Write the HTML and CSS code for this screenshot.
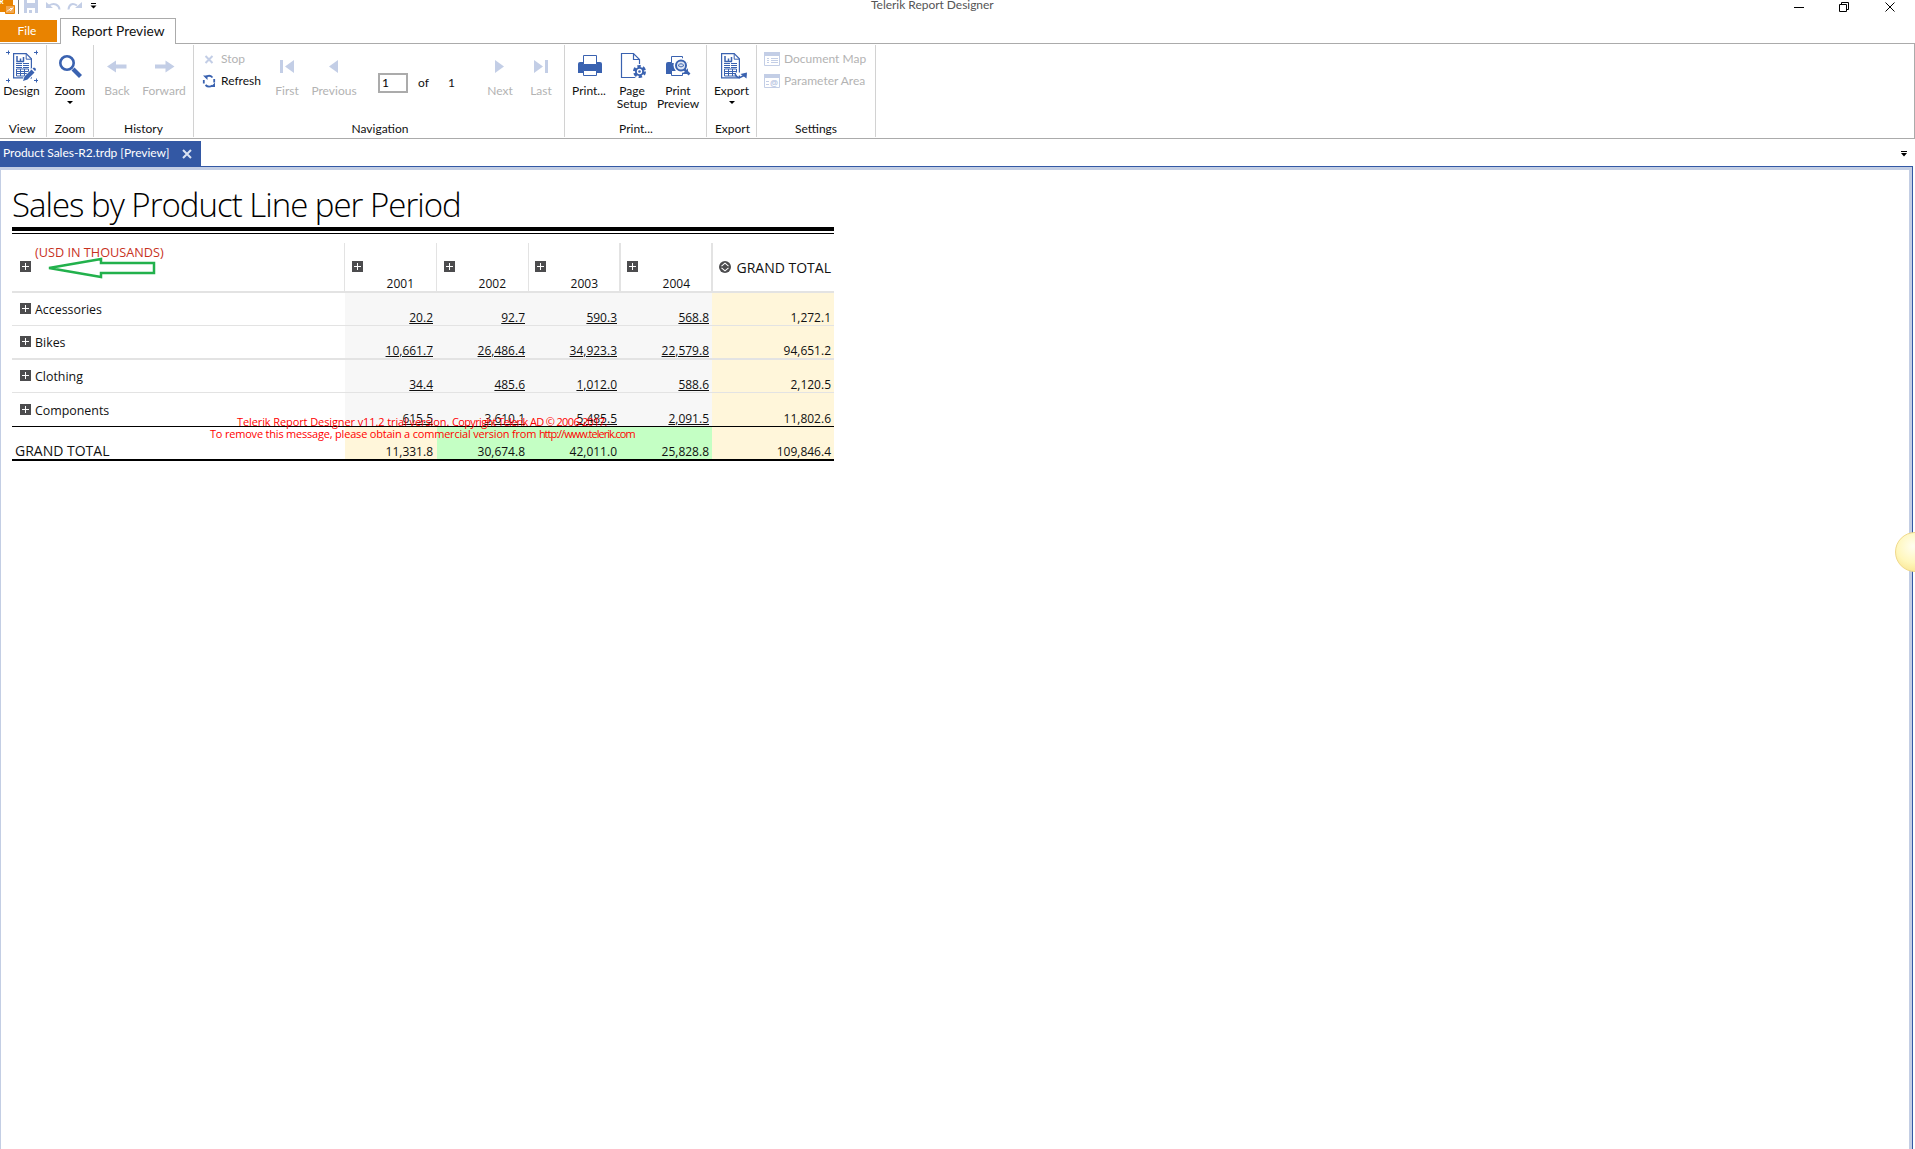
FILE: index.html
```html
<!DOCTYPE html>
<html lang="en">
<head>
    <meta charset="UTF-8">
    <title>Telerik Report Designer</title>
    <link rel="stylesheet" href="styles.css">
</head>
<body>
<svg width="0" height="0" class="defs">
    <symbol id="plus" viewBox="0 0 11 11">
        <path fill="#4c4c4e" d="M0 0h11v11H0z"/>
        <path stroke="#fff" d="M2 5.5h7M5.5 2v7"/>
    </symbol>
    <symbol id="report" viewBox="0 0 20 26">
        <path fill="#fff" stroke="#3a62b0" stroke-width="1.2" d="M.6.6h12.6l5.2 5.2v19H.6z"/>
        <path fill="none" stroke="#3a62b0" d="M13.2.6v5.6h5.2"/>
        <path fill="none" stroke="#3a62b0" stroke-width="1.500" d="M4 3v5.500h7M7.500 5.500v3M10.500 4v4.500"/>
        <path stroke="#3a62b0" d="M3 10.500h6M10 10.500h6M3 12.500h6M10 12.500h6M3 14.500h6M10 14.500h6"/>
        <path fill="none" stroke="#3a62b0" d="M3.500 16v7h12v-7zM3 18.500h13M3 20.500h13M7.500 16v7M11.500 16v7"/>
    </symbol>
</svg>

<div class="titlebar">
    <div class="quick">
        <svg width="100" height="16">
            <path fill="#e98300" d="M0 0h13v6H5v6H0z"/>
            <text x="-1" y="4" class="logo_r">R</text>
            <path fill="#f2a64d" stroke="#e98300" d="M5.500 5.500h9v8h-9z"/>
            <path fill="none" stroke="#fff" d="M7 11.500l2-2 2 1 2-3M10 8.500h2"/>
            <path stroke="#777" d="M18.500 0v14"/>
            <path fill="#c3cee6" d="M24 0h14v13H24z"/>
            <path fill="#fff" d="M27 0h8v3h-8zM27 8h8v5h-8z"/>
            <path fill="#c3cee6" d="M29 10h3v3h-3z"/>
            <path fill="none" stroke="#c3cee6" stroke-width="2" d="M49 5.500c5-3 10-1 10.500 4M77 5.500c-5-3-8-1-8.500 4"/>
            <path fill="#c3cee6" d="M46 8V2l7 6zM82 8V2l-7 6z"/>
            <path d="M91 3h5v1h-5zM90.500 5.500h6l-3 3z"/>
        </svg>
    </div>
    <div class="app_name">Telerik Report Designer</div>
    <svg class="win_btns" width="110" height="14">
        <g fill="none" stroke="#000">
            <path d="M4 7.500h10"/>
            <path d="M49.500 4.500h7v7h-7zM51.500 4.500v-2h7v7h-2"/>
            <path d="M95.500 2.500l9 9M104.500 2.500l-9 9"/>
        </g>
    </svg>
</div>

<div class="tabs">
    <div class="tab_file">File</div>
    <div class="tab_on">Report Preview</div>
</div>

<div class="ribbon">
    <div class="group g_view">
        <div class="items">
            <div class="btn w43">
                <svg width="34" height="34" viewBox="0 0 34 34">
                    <path stroke="#3a62b0" d="M1 3.500h4M3.500 1.500v4M29 3.500h4M31.500 1.500v4M1 31.500h4M3.500 29.500v4M29 31.500h4M31.500 29.500v4"/>
                    <use href="#report" x="8" y="4" width="20" height="26"/>
                    <path stroke="#fff" stroke-width="6" d="M20 31l9-10"/>
                    <path fill="#3a62b0" d="M18 32l1.500-4.500 7-7 3 3-7 7zM27.500 19.500l1.500-1q2 0 2 2.500l-1 1z"/>
                </svg>
                <span>Design</span>
            </div>
        </div>
        <div class="label">View</div>
    </div>
    <div class="group g_zoom">
        <div class="items">
            <div class="btn w46">
                <svg width="34" height="34" viewBox="0 0 34 34">
                    <circle cx="14" cy="14" r="6.700" fill="none" stroke="#3a62b0" stroke-width="2.600"/>
                    <path stroke="#3a62b0" stroke-width="4.200" d="M20 20l7.500 7.500"/>
                </svg>
                <span>Zoom</span>
                <i class="caret"></i>
            </div>
        </div>
        <div class="label">Zoom</div>
    </div>
    <div class="group g_history">
        <div class="items">
            <div class="btn off w46">
                <svg width="34" height="34"><path fill="#c3cee6" d="M7 17.500l9-6v4h10.500v4H16v4z"/></svg>
                <span>Back</span>
            </div>
            <div class="btn off w48">
                <svg width="34" height="34"><path fill="#c3cee6" d="M27.500 17.500l-9-6v4H8v4h10.500v4z"/></svg>
                <span>Forward</span>
            </div>
        </div>
        <div class="label">History</div>
    </div>
    <div class="group g_nav">
        <div class="items">
            <div class="list list_nav">
                <div class="row off">
                    <svg width="14" height="14"><path stroke="#c3cee6" stroke-width="2" d="M3.500 4l7 7M10.500 4l-7 7"/></svg>
                    <span>Stop</span>
                </div>
                <div class="row">
                    <svg width="14" height="14">
                        <path fill="none" stroke="#3a62b0" stroke-width="1.800" d="M3.500 3.200q4-3 7 .3M12.200 5v3.500M10.500 11.500q-4 2.500-7-.5M1.800 9.500V6"/>
                        <path fill="#3a62b0" d="M1 1.500h4.500v4.500zM13 8.500v4.500H8.500z"/>
                    </svg>
                    <span>Refresh</span>
                </div>
            </div>
            <div class="btn off w40">
                <svg width="34" height="34"><path fill="#c3cee6" d="M10 11h3v13h-3zM24 11v13l-9-6.500z"/></svg>
                <span>First</span>
            </div>
            <div class="btn off w54">
                <svg width="34" height="34"><path fill="#c3cee6" d="M21 11v13l-9-6.500z"/></svg>
                <span>Previous</span>
            </div>
            <div class="pager">
                <input type="text" value="1">
                <span class="of">of</span>
                <span>1</span>
            </div>
            <div class="btn off w40">
                <svg width="34" height="34"><path fill="#c3cee6" d="M12 11v13l9-6.500z"/></svg>
                <span>Next</span>
            </div>
            <div class="btn off w42">
                <svg width="34" height="34"><path fill="#c3cee6" d="M10 11v13l9-6.500zM21 11h3v13h-3z"/></svg>
                <span>Last</span>
            </div>
        </div>
        <div class="label">Navigation</div>
    </div>
    <div class="group g_print">
        <div class="items">
            <div class="btn w46">
                <svg width="34" height="34">
                    <path fill="#3a62b0" d="M6 15q0-2 2-2h20q2 0 2 2v9H6z"/>
                    <path fill="#fff" stroke="#3a62b0" d="M11.500 6.500h13v9h-13zM11.500 21.500h13v5h-13z"/>
                </svg>
                <span>Print...</span>
            </div>
            <div class="btn w40">
                <svg width="34" height="34">
                    <path fill="none" stroke="#3a62b0" stroke-width="1.200" d="M6.500 4.500h12l6 6v18h-18zM18.500 4.500v6h6"/>
                    <circle cx="24.500" cy="22.500" r="7.500" fill="#fff"/>
                    <circle cx="24.500" cy="22.500" r="4.500" fill="#3a62b0"/>
                    <circle cx="24.500" cy="22.500" r="5" fill="none" stroke="#3a62b0" stroke-width="3" stroke-dasharray="3.200 2.040"/>
                    <circle cx="24.500" cy="22.500" r="2" fill="none" stroke="#fff" stroke-width="1.300"/>
                </svg>
                <span>Page<br>Setup</span>
            </div>
            <div class="btn w52">
                <svg width="34" height="34">
                    <path fill="#3a62b0" d="M5 15q0-2 2-2h20v12H5z"/>
                    <path fill="#fff" stroke="#3a62b0" d="M10.500 7.500h11v7h-11zM10.500 21.500h11v5h-11z"/>
                    <circle cx="20" cy="16.500" r="7.500" fill="#fff"/>
                    <circle cx="20" cy="16.500" r="5" fill="#dfe6f3" stroke="#3a62b0" stroke-width="2"/>
                    <path fill="none" stroke="#3a62b0" d="M17 16.500q3-3.500 6 0q-3 3-6 0"/>
                    <path stroke="#3a62b0" stroke-width="2.600" d="M23.500 20.500l5 5"/>
                </svg>
                <span>Print<br>Preview</span>
            </div>
        </div>
        <div class="label">Print...</div>
    </div>
    <div class="group g_export">
        <div class="items">
            <div class="btn w49">
                <svg width="34" height="34">
                    <use href="#report" x="6" y="4" width="20" height="26"/>
                    <path stroke="#fff" stroke-width="3" d="M20 25h8"/>
                    <path fill="none" stroke="#3a62b0" stroke-width="1.500" d="M20 24q1 5 5 4.500l4-2"/>
                    <path fill="#3a62b0" d="M25.500 25l6.500-1.500-.5 6z"/>
                </svg>
                <span>Export</span>
                <i class="caret"></i>
            </div>
        </div>
        <div class="label">Export</div>
    </div>
    <div class="group g_settings">
        <div class="items">
            <div class="list">
                <div class="row off">
                    <svg width="16" height="14">
                        <path fill="none" stroke="#c3cee6" d="M.5.5h15v13H.5zM3 6.500h2M3 8.500h2M3 10.500h2M7 6.500h7M7 8.500h7M7 10.500h7"/>
                        <path fill="#c3cee6" d="M0 0h16v4H0z"/>
                    </svg>
                    <span>Document Map</span>
                </div>
                <div class="row off">
                    <svg width="16" height="14">
                        <path fill="none" stroke="#c3cee6" d="M.5.500h15v13H.5zM2 7.500h3M2 10.500h3"/>
                        <path fill="#c3cee6" d="M0 0h16v4H0z"/>
                        <text x="6" y="12" class="at">@</text>
                    </svg>
                    <span>Parameter Area</span>
                </div>
            </div>
        </div>
        <div class="label">Settings</div>
    </div>
</div>

<div class="docs">
    <div class="doc_tab">
        <span>Product Sales-R2.trdp [Preview]</span>
        <svg width="10" height="10"><path stroke="#dbe3f3" stroke-width="2" d="M1 1l8 8M9 1L1 9"/></svg>
    </div>
    <svg class="docs_menu" width="6" height="6"><path d="M0 0h6v1H0zM0 2h6L3 5.500z"/></svg>
</div>

<div class="viewer">
    <div class="report">
        <h1>Sales by Product Line per Period</h1>
        <div class="rule"></div>
        <table>
            <colgroup>
                <col class="c_name"><col class="c_year"><col class="c_year"><col class="c_year"><col class="c_last"><col class="c_total">
            </colgroup>
            <tr class="head">
                <th class="corner"><span class="usd">(USD IN THOUSANDS)</span><svg class="plus" width="11" height="11"><use href="#plus"/></svg></th>
                <th><svg class="plus" width="11" height="11"><use href="#plus"/></svg><span class="year">2001</span></th>
                <th><svg class="plus" width="11" height="11"><use href="#plus"/></svg><span class="year">2002</span></th>
                <th class="wide"><svg class="plus" width="11" height="11"><use href="#plus"/></svg><span class="year">2003</span></th>
                <th class="y2004"><svg class="plus" width="11" height="11"><use href="#plus"/></svg><span class="year">2004</span></th>
                <th class="th_total">
                    <div class="gt">
                        <svg width="12" height="12">
                            <circle cx="6" cy="6" r="6" fill="#4c4c4e"/>
                            <path fill="none" stroke="#fff" stroke-width="1.100" d="M2.500 5.200L6 2.200l3.500 3M2.500 6.800l3.500 3 3.500-3"/>
                        </svg>
                        <span>GRAND TOTAL</span>
                    </div>
                </th>
            </tr>
            <tr class="r33">
                <td><svg width="11" height="11"><use href="#plus"/></svg><span>Accessories</span></td>
                <td><u>20.2</u></td><td><u>92.7</u></td><td><u>590.3</u></td><td><u>568.8</u></td><td>1,272.1</td>
            </tr>
            <tr class="r34">
                <td><svg width="11" height="11"><use href="#plus"/></svg><span>Bikes</span></td>
                <td><u>10,661.7</u></td><td><u>26,486.4</u></td><td><u>34,923.3</u></td><td><u>22,579.8</u></td><td>94,651.2</td>
            </tr>
            <tr class="r33">
                <td><svg width="11" height="11"><use href="#plus"/></svg><span>Clothing</span></td>
                <td><u>34.4</u></td><td><u>485.6</u></td><td><u>1,012.0</u></td><td><u>588.6</u></td><td>2,120.5</td>
            </tr>
            <tr class="r34 last">
                <td><svg width="11" height="11"><use href="#plus"/></svg><span>Components</span></td>
                <td><u>615.5</u></td><td><u>3,610.1</u></td><td><u>5,485.5</u></td><td><u>2,091.5</u></td><td>11,802.6</td>
            </tr>
            <tr class="total">
                <td>GRAND TOTAL</td>
                <td>11,331.8</td><td class="good">30,674.8</td><td class="good">42,011.0</td><td class="good">25,828.8</td><td>109,846.4</td>
            </tr>
        </table>
        <div class="trial t1">Telerik Report Designer v11.2 trial version. <span>Copyright Telerik AD © 2006-2017.</span></div>
        <div class="trial t2">To remove this message, please obtain a commercial version from <span>http://www.telerik.com</span></div>
        <svg class="arrow" width="110" height="24">
            <path fill="none" stroke="#22b14c" stroke-width="2.500" d="M2 11L54 2v4h53v10H54v4z"/>
        </svg>
    </div>
</div>
<div class="bubble"></div>
</body>
</html>
```
FILE: styles.css
```css
* {
    margin: 0;
    padding: 0;
    box-sizing: border-box;
}

html, body {
    height: 100%;
    overflow: hidden;
}

body {
    position: relative;
    display: flex;
    flex-direction: column;
    background: #fff;
    color: #111;
    font: 12px/13px Lato, "Open Sans", sans-serif;
}

svg {
    display: block;
    flex: none;
}

.defs {
    position: absolute;
}

.titlebar {
    display: flex;
    height: 18px;
    flex: none;
}

.quick {
    width: 871px;
}

.logo_r {
    font: bold 7px "Open Sans", sans-serif;
    fill: #fff;
}

.app_name {
    flex: 1;
    color: #555;
    line-height: 10px;
    letter-spacing: -0.03px;
}

.win_btns {
    margin-right: 15px;
}

.tabs {
    display: flex;
    height: 26px;
    flex: none;
    margin-bottom: -1px;
    z-index: 1;
}

.tab_file {
    width: 57px;
    height: 22px;
    margin: 2px 3px 0 0;
    padding-right: 3px;
    background: #e98300;
    color: #fff;
    text-align: center;
    line-height: 21px;
}

.tab_on {
    width: 116px;
    border: 1px solid #ababab;
    border-bottom: 0;
    background: #fff;
    text-align: center;
    font-size: 13.800px;
    line-height: 24px;
    white-space: nowrap;
}

.ribbon {
    display: flex;
    flex: none;
    height: 96px;
    border: 1px solid #ababab;
    border-left: 0;
    padding: 1px 0;
}

.group {
    display: flex;
    flex-direction: column;
    border-right: 1px solid #d2d2d2;
    flex: none;
}

.g_view { width: 47px; }
.g_zoom { width: 47px; }
.g_history { width: 100px; }
.g_nav { width: 371px; }
.g_print { width: 142px; padding-left: 1px; }
.g_export { width: 50px; }
.g_settings { width: 119px; }

.items {
    display: flex;
    height: 77px;
    padding-top: 4px;
}

.label {
    text-align: center;
}

.g_view .label {
    padding-right: 2px;
}

.g_nav .label, .g_export .label {
    padding-left: 2px;
}

.btn {
    display: flex;
    flex-direction: column;
    align-items: center;
    text-align: center;
    flex: none;
}

.btn span {
    margin-top: 1px;
}

.btn .caret {
    border: 3px solid transparent;
    border-top-color: #000;
    border-bottom: 0;
    margin-top: 4px;
}

.off {
    color: #b3b3b3;
}

.w40 { width: 40px; }
.w42 { width: 42px; }
.w43 { width: 43px; }
.w46 { width: 46px; }
.w48 { width: 48px; }
.w49 { width: 49px; }
.w52 { width: 52px; }
.w54 { width: 54px; }

.list {
    padding: 3px 0 0 7px;
}

.row {
    display: flex;
    align-items: center;
    height: 14px;
    margin-bottom: 8px;
    gap: 4px;
    white-space: nowrap;
}

.row span {
    padding-bottom: 2px;
}

.list_nav {
    width: 73px;
    padding-left: 8px;
}

.list_nav .row {
    gap: 5px;
}

.at {
    font: bold 9px "Open Sans", sans-serif;
    fill: #c3cee6;
}

.pager {
    display: flex;
    align-items: center;
    width: 119px;
    height: 20px;
    margin-top: 24px;
    padding-left: 17px;
}

.pager input {
    width: 30px;
    height: 20px;
    border: 2px solid #ababab;
    font: 12px Lato, sans-serif;
    padding: 0 0 1px 2px;
}

.pager span {
    padding-bottom: 1px;
}

.pager .of {
    margin: 0 19px 0 10px;
}

.docs {
    display: flex;
    justify-content: space-between;
    height: 27px;
    padding-top: 2px;
    flex: none;
}

.doc_tab {
    display: flex;
    align-items: center;
    justify-content: space-between;
    width: 201px;
    padding: 0 9px 0 3px;
    background: #3358a4;
    color: #fff;
}

.doc_tab span {
    padding-bottom: 2px;
    letter-spacing: -0.03px;
}

.docs_menu {
    margin: 10px 8px 0 0;
}

.viewer {
    flex: 1;
    width: 1913px;
    border-top: 1px solid #3358a4;
    border-right: 1px solid #3358a4;
    box-shadow: inset 1px 3px #c3cee4, inset -3px 0 #c3cee4;
    padding: 3px 0 0 12px;
}

.report {
    position: relative;
    width: 822px;
    color: #111;
    font: 12px/16px "Open Sans", sans-serif;
}

h1 {
    height: 57px;
    font-size: 33px;
    font-weight: 300;
    line-height: 70px;
    letter-spacing: -1px;
    color: #000;
    white-space: nowrap;
}

.rule {
    height: 7px;
    border-top: 4px solid #000;
    border-bottom: 1px solid #000;
    margin-bottom: 9px;
}

table {
    width: 822px;
    table-layout: fixed;
    border-collapse: separate;
    border-spacing: 0;
}

.c_name { width: 333px; }
.c_year { width: 92px; }
.c_last { width: 91px; }
.c_total { width: 122px; }

.head {
    height: 50px;
}

th {
    position: relative;
    font-weight: normal;
    text-align: right;
    vertical-align: bottom;
    border-right: 1px solid #e3e3e3;
    border-bottom: 2px solid #e3e3e3;
}

th.wide {
    border-right-width: 2px;
}

th.th_total {
    border-right: 0;
    border-left: 1px solid #e3e3e3;
}

.plus {
    position: absolute;
    left: 7px;
    top: 18px;
}

.wide .plus, .y2004 .plus {
    left: 6px;
}

.corner .plus {
    left: 8px;
}

.usd {
    display: block;
    height: 48px;
    padding: 1px 0 0 23px;
    text-align: left;
    font-size: 12.700px;
    color: #c8321e;
}

.year {
    display: block;
    padding-right: 22px;
    line-height: 15px;
}

.wide .year, .y2004 .year {
    padding-right: 21px;
}

.gt {
    display: flex;
    align-items: center;
    justify-content: space-between;
    height: 48px;
    padding: 0 3px 0 6px;
    font-size: 14px;
}

.gt span {
    padding-top: 2px;
}

td {
    vertical-align: bottom;
    text-align: right;
    padding: 0 4px 0 0;
    background: #f7f7f7;
    border-bottom: 1px solid #e3e3e3;
    line-height: 15px;
}

td:nth-child(5), td:last-child {
    padding-right: 3px;
}

td u {
    text-underline-offset: 1px;
    text-decoration-thickness: 1px;
}

td:first-child {
    background: #fff;
    text-align: left;
    padding: 2px 0 0 8px;
    vertical-align: top;
    font-size: 12.400px;
    line-height: 30px;
}

td:first-child svg {
    float: left;
    margin: 8px 4px 0 0;
}

td:last-child {
    background: #fff6da;
}

.r33 { height: 33px; }
.r34 { height: 34px; }

.r34 td {
    border-bottom-width: 2px;
}

.last td {
    border-bottom: 1px solid #000;
}

.last td:first-child {
    padding-top: 3px;
}

.total {
    height: 34px;
}

.total td {
    background: #fff6da;
    border-bottom: 2px solid #000;
}

.total td:first-child {
    background: #fff;
    padding: 0 0 1px 3px;
    font-size: 14px;
    line-height: 15px;
    vertical-align: bottom;
}

.total td.good {
    background: #c4ffc4;
}

.trial {
    position: absolute;
    color: #f00;
    font-size: 11px;
    line-height: 12px;
    white-space: nowrap;
}

.t1 {
    left: 225px;
    top: 246px;
    letter-spacing: -0.1px;
}

.t1 span {
    letter-spacing: -0.65px;
}

.t2 {
    left: 198px;
    top: 258px;
    letter-spacing: -0.2px;
}

.t2 span {
    letter-spacing: -1px;
}

.arrow {
    position: absolute;
    left: 35px;
    top: 87px;
}

.bubble {
    position: absolute;
    left: 1895px;
    top: 532px;
    width: 40px;
    height: 40px;
    border: 1px solid #f0d98a;
    border-radius: 50%;
    background: radial-gradient(circle at 45% 35%, #fffef0, #fff7bd 50%, #f7dc7c);
}
```
